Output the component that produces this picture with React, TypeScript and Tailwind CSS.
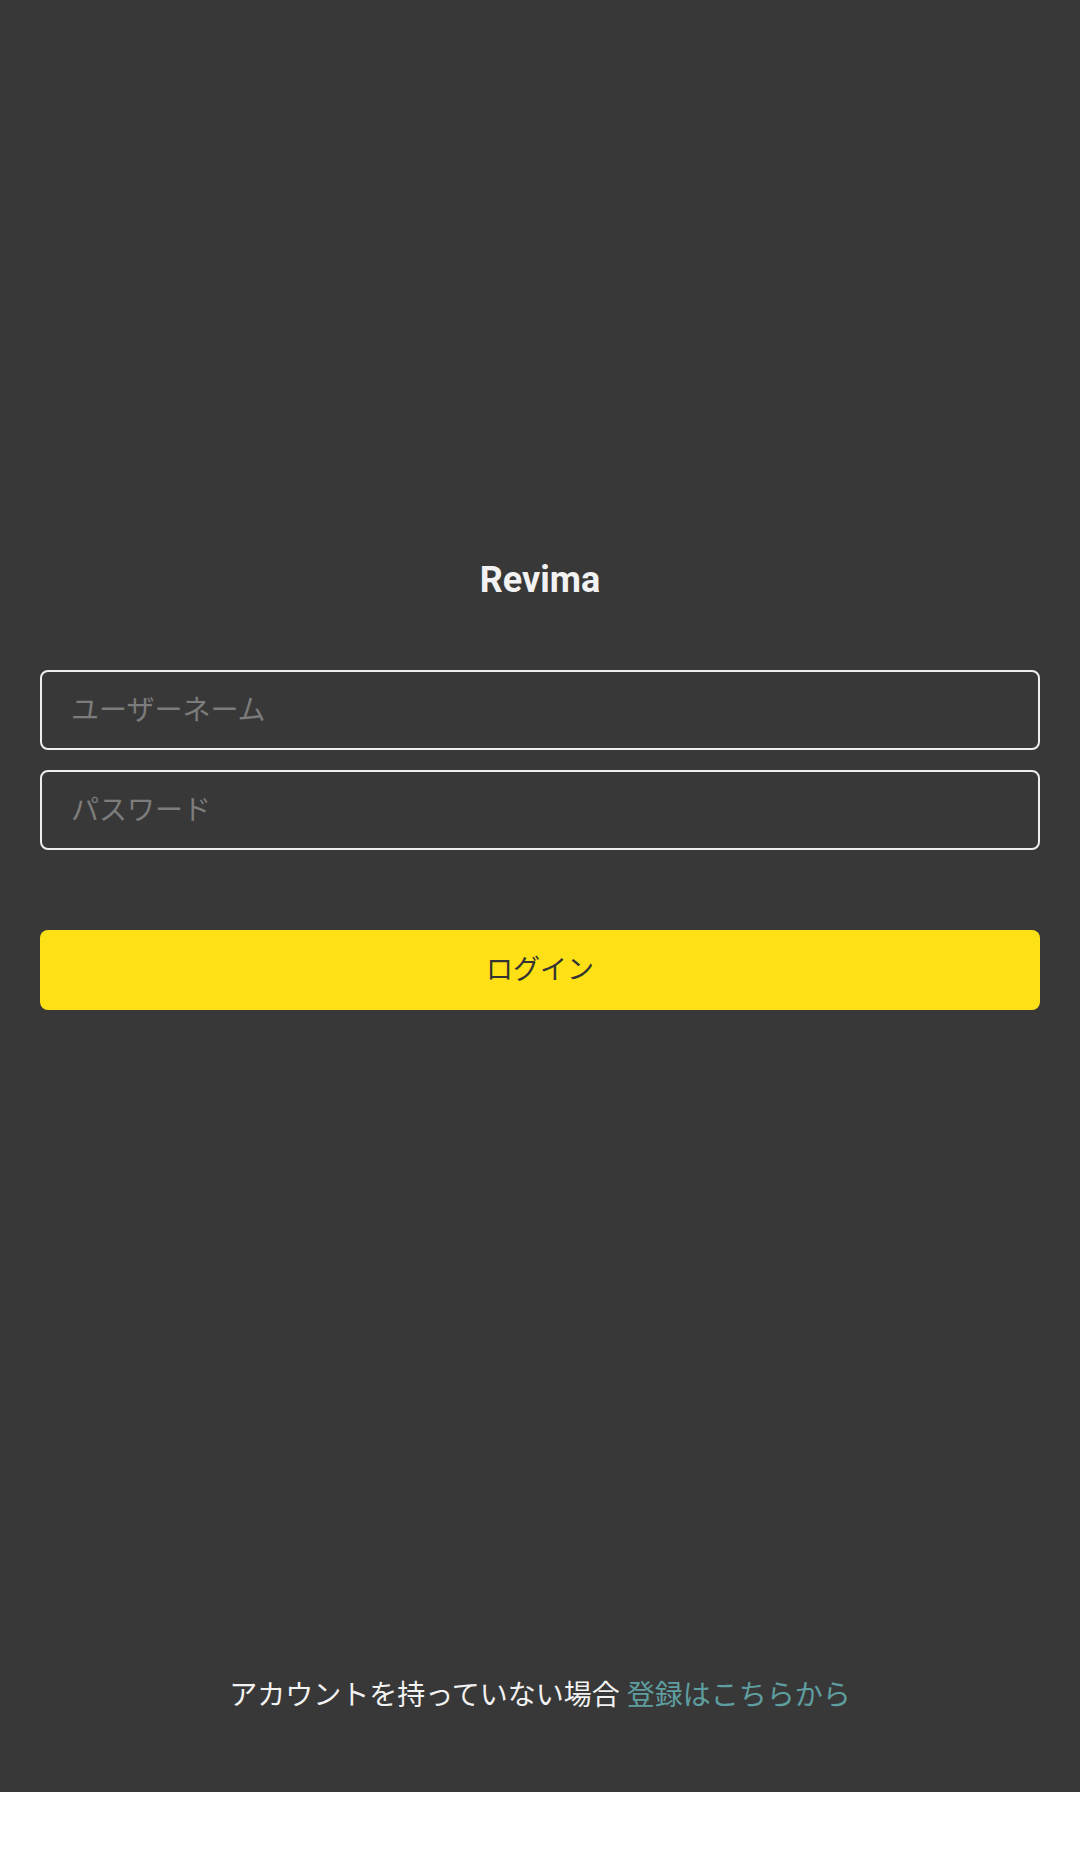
import React from 'react';

const font = { fontFamily: 'Roboto, "Noto Sans CJK JP", sans-serif' };

const LoginScreen = () => {
  return (
    <div className="bg-white min-h-[1868px]" style={font}>
      <div className="h-[1792px] bg-[#383838] flex flex-col px-[40px]">
        {/* Title */}
        <h1 className="pt-[560px] text-center text-[36px] leading-[40px] font-bold text-[#f2f2f2]">
          Revima
        </h1>

        {/* Form */}
        <form className="mt-[70px] flex flex-col gap-[20px]" onSubmit={(e) => e.preventDefault()}>
          <input
            type="text"
            placeholder="ユーザーネーム"
            className="h-[80px] w-full rounded-[8px] border-2 border-[#eeeeee] bg-transparent px-[29px] text-[28px] text-white placeholder:text-[#7c7c7c] outline-none"
          />
          <input
            type="password"
            placeholder="パスワード"
            className="h-[80px] w-full rounded-[8px] border-2 border-[#eeeeee] bg-transparent px-[29px] text-[28px] text-white placeholder:text-[#7c7c7c] outline-none"
          />
          <button
            type="submit"
            className="mt-[60px] h-[80px] w-full rounded-[8px] bg-[#fde015] text-[27px] text-[#333333]"
          >
            ログイン
          </button>
        </form>

        {/* Footer */}
        <p className="mt-auto pb-[81px] text-center text-[28px] leading-[30px] text-[#f2f2f2]">
          アカウントを持っていない場合 <a href="#" className="text-[#5f9ea0]">登録はこちらから</a>
        </p>
      </div>
    </div>
  );
};

export default function App() {
  return <LoginScreen />;
}
